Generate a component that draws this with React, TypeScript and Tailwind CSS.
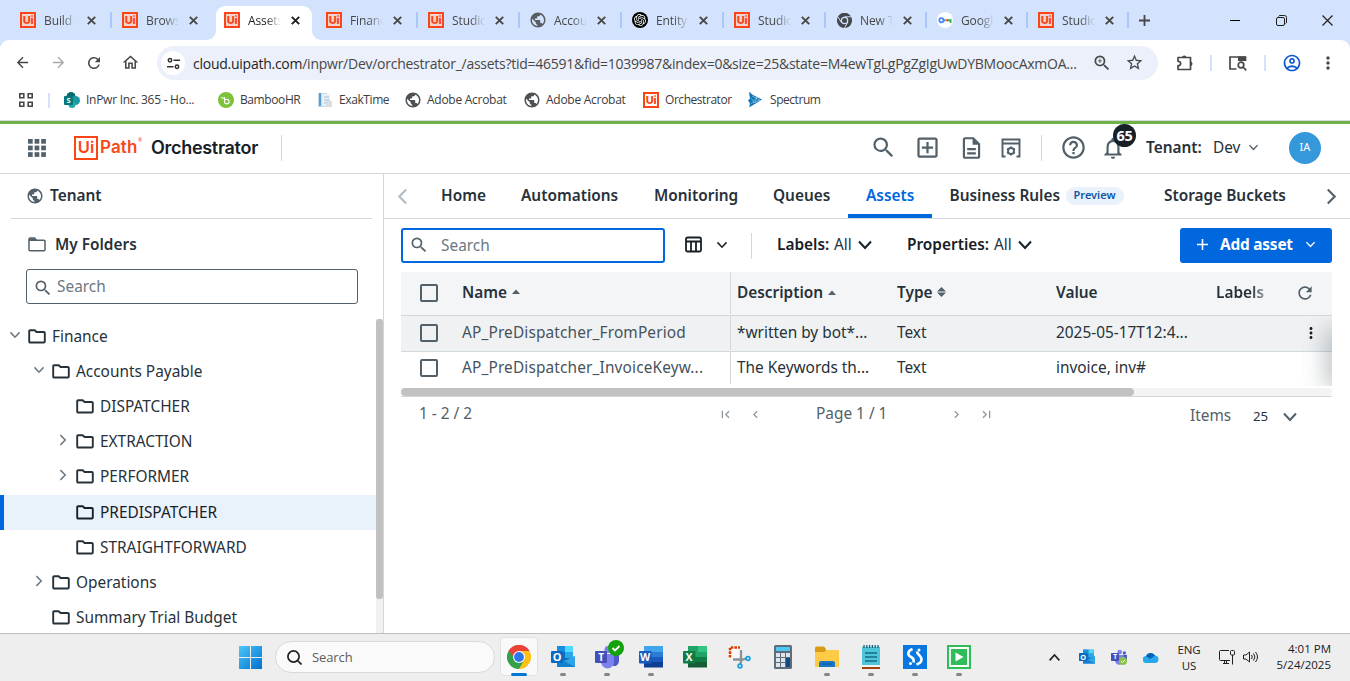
import React from "react";
import {
  MdPublic, MdSearch, MdOutlineAddBox, MdOutlineDescription, MdHelpOutline, MdNotificationsNone,
  MdRefresh, MdMoreVert, MdAdd, MdArrowBack, MdArrowForward, MdOutlineHome,
  MdZoomIn, MdStarBorder, MdOutlineAccountCircle, MdFirstPage, MdLastPage,
  MdChevronLeft, MdChevronRight,
} from "react-icons/md";
import { SiOpenai } from "react-icons/si";

const CHROME = "font-['Open_Sans','Noto_Sans',sans-serif]";

function Chevron({ dir = "down", className = "" }: { dir?: "down" | "up" | "left" | "right"; className?: string }) {
  const d = { down: "M2 4.5 8 11l6-6.5", up: "M2 11.5 8 5l6 6.5", left: "M11.5 1.5 5 8l6.5 6.5", right: "M4.5 1.5 11 8l-6.5 6.5" }[dir];
  return (
    <svg viewBox="0 0 16 16" fill="none" stroke="currentColor" strokeWidth="2" className={"shrink-0 " + className}>
      <path d={d} />
    </svg>
  );
}

function UiIcon({ light = false }: { light?: boolean }) {
  return (
    <span className={"flex h-4 w-4 shrink-0 items-center justify-center border-2 border-[#fa4616] font-['Inter',sans-serif] text-[11px] leading-none font-extrabold tracking-[-0.3px] text-[#fa4616] " + (light ? "bg-white" : "bg-[#f5d3d0]")}>
      Ui
    </span>
  );
}

function ChromeLogo({ size, mono = false }: { size: number; mono?: boolean }) {
  return (
    <svg width={size} height={size} viewBox="0 0 24 24">
      <path d="M12 12 1.6 6A12 12 0 0 1 22.4 6Z" fill={mono ? "#45494d" : "#ea4335"} />
      <path d="M12 12V6h10.4A12 12 0 0 1 12 24Z" fill={mono ? "#45494d" : "#fbc116"} />
      <path d="m12 12 5.2 3L12 24A12 12 0 0 1 1.6 6Z" fill={mono ? "#45494d" : "#34a04c"} />
      <path d="M1.6 6 6.8 15 12 12V6Z" fill={mono ? "#45494d" : "#34a04c"} />
      <path d="M1.6 6 7 12 12 6h10.4A12 12 0 0 0 1.6 6Z" fill={mono ? "#45494d" : "#ea4335"} />
      {mono && <path d="M12 6h10.4M6.8 15 1.6 6M17.2 15 12 24" stroke="#d3e3fd" strokeWidth="1.5" />}
      <circle cx="12" cy="12" r="6" fill={mono ? "#d3e3fd" : "#fff"} />
      <circle cx="12" cy="12" r={mono ? 4 : 4.9} fill={mono ? "#45494d" : "#2e74ea"} />
    </svg>
  );
}

function KeyIcon() {
  return (
    <svg width="16" height="16" viewBox="0 0 16 16">
      <circle cx="8" cy="8" r="8" fill="#fff" />
      <circle cx="4.400" cy="8.300" r="2.100" fill="none" stroke="#4285f4" strokeWidth="1.700" />
      <path d="M6.500 7.300H9v2H6.500z" fill="#4285f4" />
      <path d="M8 7.300h2v2H8z" fill="#fbbc04" />
      <path d="M10 7.300h4.500V11h-1.800V9.300H10z" fill="#34a853" />
      <path d="M9.300 7.300h1.400v2H9.300z" fill="#ea4335" />
    </svg>
  );
}

type Fav = "ui" | "globe" | "openai" | "chrome" | "key";
const tabs: { t: string; f: Fav; active?: boolean; sep: boolean; narrow?: boolean }[] = [
  { t: "Build - Studio", f: "ui", sep: true },
  { t: "Browse", f: "ui", sep: false },
  { t: "Assets", f: "ui", active: true, sep: false },
  { t: "Finance", f: "ui", sep: true },
  { t: "Studio", f: "ui", sep: true },
  { t: "Account", f: "globe", sep: true },
  { t: "Entity", f: "openai", sep: true },
  { t: "Studio", f: "ui", sep: true },
  { t: "New Tab", f: "chrome", sep: true, narrow: true },
  { t: "Google", f: "key", sep: true, narrow: true },
  { t: "Studio", f: "ui", sep: true, narrow: true },
];

function Favicon({ f }: { f: Fav }) {
  if (f === "ui") return <UiIcon />;
  if (f === "globe") return <MdPublic className="h-[18px] w-[18px] shrink-0 text-[#5a5e62]" />;
  if (f === "openai") return <span className="flex h-4 w-4 items-center justify-center rounded-full bg-black"><SiOpenai className="h-3 w-3 text-white" /></span>;
  if (f === "chrome") return <ChromeLogo size={15} mono />;
  return <KeyIcon />;
}

function TabStrip() {
  return (
    <div className={"flex h-10 items-stretch bg-[#d3e3fd] pl-[10px] " + CHROME}>
      {tabs.map((tab, i) => (
        <div key={i} className={"relative flex shrink-0 items-center pl-[10px] " + (tab.narrow ? "w-[101px]" : "w-[102px]")}>
          {tab.active && (
            <svg className="absolute top-[6px] -left-[8px]" width="118" height="34" viewBox="0 0 118 34">
              <path d="M0 34c6 0 10-4 10-10V10C10 4 14 0 20 0h76c6 0 10 4 10 10v14c0 6 4 10 10 10Z" fill="#fff" />
            </svg>
          )}
          <span className="relative flex h-4 w-4 items-center justify-center"><Favicon f={tab.f} /></span>
          <span className={"relative mt-px ml-2 w-[33px] overflow-hidden text-[12px] tracking-[-0.1px] whitespace-nowrap [mask-image:linear-gradient(to_right,black_55%,transparent_100%)] " + (tab.active ? "text-[#1f1f1f]" : "text-[#474747]")}>{tab.t}</span>
          <svg className={"relative ml-[10px] h-[9px] w-[9px] " + (tab.active ? "text-[#1f1f1f]" : "text-[#474747]")} viewBox="0 0 9 9" stroke="currentColor" strokeWidth="1.900"><path d="m.8.8 7.400 7.400m0-7.400L.8 8.200" /></svg>
          {tab.sep && <span className="ml-auto h-4 w-[2px] bg-[#a8c7fa]" />}
        </div>
      ))}
      <div className="flex flex-1 items-center text-[#1f1f1f]">
        <svg className="ml-[10px] h-[11px] w-[11px] text-[#474747]" viewBox="0 0 11 11" stroke="currentColor" strokeWidth="1.800"><path d="M0 5.500h11M5.500 0v11" /></svg>
        <span className="ml-[80px] h-px w-[10px] bg-black" />
        <svg className="ml-[36px] h-[11px] w-[11px]" viewBox="0 0 11 11" fill="none" stroke="currentColor"><rect x=".5" y="2.500" width="8" height="8" rx="1.500" /><path d="M2.500 1.500c.3-.7.8-1 1.500-1H8.500a2 2 0 0 1 2 2V7c0 .7-.4 1.300-1 1.500" /></svg>
        <svg className="ml-[35px] h-[11px] w-[11px]" viewBox="0 0 11 11" stroke="currentColor" strokeWidth="1.200"><path d="m.5.5 10 10m0-10-10 10" /></svg>
      </div>
    </div>
  );
}

function AddressRow() {
  return (
    <div className={"flex h-[45px] items-center text-[#474747] " + CHROME}>
      <div className="flex w-11 justify-center"><MdArrowBack className="h-[17px] w-[17px]" /></div>
      <div className="flex w-7 justify-center"><MdArrowForward className="h-[17px] w-[17px] text-[#a9a9a9]" /></div>
      <div className="flex w-11 justify-center"><MdRefresh className="h-[18px] w-[18px]" /></div>
      <div className="flex w-7 justify-center"><MdOutlineHome className="h-[19px] w-[19px]" /></div>
      <div className="mt-px ml-[13px] flex h-[34px] w-[1001px] items-center rounded-full bg-[#ebf0fa] pl-[4px]">
        <span className="flex h-6 w-6 items-center justify-center rounded-full bg-white">
          <svg className="h-[13px] w-[13px]" viewBox="0 0 13 13" fill="none" stroke="#303030" strokeWidth="1.500"><circle cx="3" cy="3.300" r="1.700" /><path d="M6.500 3.300H13M0 9.700h6.500" /><circle cx="10" cy="9.700" r="1.700" /></svg>
        </span>
        <span className="ml-[8px] w-[897px] text-[14px] tracking-[-0.255px] whitespace-nowrap text-[#474747]">
          <span className="text-[#1f1f1f]">cloud.uipath.com</span>/inpwr/Dev/orchestrator_/assets?tid=46591&amp;fid=1039987&amp;index=0&amp;size=25&amp;state=M4ewTgLgPgZgIgUwDYBMoocAxmOA...
        </span>
        <MdZoomIn className="mb-px ml-[2px] h-[20px] w-[20px] shrink-0" />
        <MdStarBorder className="mb-px ml-[13px] h-[19px] w-[19px] shrink-0" />
      </div>
      <svg className="ml-[18px] h-[18px] w-[18px]" viewBox="0 0 18 18" fill="none" stroke="currentColor" strokeWidth="1.700"><path d="M2 3.500h12.500v12H2v-3.800c3.500.2 3.500-4.600 0-4.400Z" strokeLinejoin="round" /><path d="M6.500 3a2 2 0 0 1 3.500 0Zm8.500 5a2 2 0 0 1 0 3.500Z" fill="currentColor" strokeWidth="1" /></svg>
      <span className="ml-[16px] h-4 w-[2px] bg-[#d3e3fd]" />
      <svg className="ml-[17px] h-4 w-[18px]" viewBox="0 0 18 16" fill="none" stroke="currentColor" strokeWidth="1.700"><path d="M7.500 14H1V2h15.500v4" /><path d="M9 1.500h8V6H9z" fill="currentColor" stroke="none" /><circle cx="12" cy="10" r="2.800" /><path d="m14 12 3.300 3.300" /></svg>
      <span className="ml-[17px] h-4 w-[2px] bg-[#d3e3fd]" />
      <MdOutlineAccountCircle className="ml-[16px] h-[20px] w-[20px] text-[#0b57d0]" />
      <MdMoreVert className="ml-[16px] h-5 w-5" />
    </div>
  );
}

function Bookmarks() {
  return (
    <div className={"flex h-[30px] items-center text-[12px] tracking-[-0.27px] whitespace-nowrap text-[#3c3c3c] " + CHROME}>
      <svg className="ml-[19px] h-[14px] w-[14px]" viewBox="0 0 14 14" fill="none" stroke="#474747" strokeWidth="1.600"><path d="M.8.8h4v4h-4zM9.200.8h4v4h-4zM.8 9.200h4v4h-4zM9.200 9.200h4v4h-4z" /></svg>
      <span className="ml-[15px] h-[15px] w-[2px] bg-[#d3e3fd]" />
      <span className="ml-[14px] flex w-[154px] items-center">
        <svg className="mr-[6px] h-4 w-4" viewBox="0 0 16 16"><circle cx="7" cy="4.500" r="4.500" fill="#036c70" /><circle cx="11.500" cy="8.500" r="4.500" fill="#1a9ba1" /><circle cx="8" cy="12.500" r="3.500" fill="#27a5ae" /><rect y="4" width="9" height="9" rx="1" fill="#03787c" /><text x="4.500" y="11.300" textAnchor="middle" fontSize="7.500" fontWeight="700" fill="#fff" fontFamily="Open Sans">S</text></svg>
        <span>InPwr Inc. 365 - Ho...</span>
      </span>
      <span className="flex w-[99px] items-center">
        <svg className="mr-[6px] h-4 w-4" viewBox="0 0 16 16"><circle cx="8" cy="8" r="8" fill="#7ec23c" /><path d="M3 5.500 6.500 6.500M6.500 5v4.500a2.300 2.300 0 1 0 2.300-2.300c-1 0-2 .7-2.300 1.600" fill="none" stroke="#fff" strokeWidth="1.100" /></svg>
        <span className="tracking-[-0.4px]">BambooHR</span>
      </span>
      <span className="flex w-[88px] items-center">
        <svg className="mr-[6px] h-4 w-4" viewBox="0 0 16 16"><path d="M1 1h9v14H1z" fill="#c5dcee" /><path d="M2 1h2v13H2z" fill="#5a9bd5" /><path d="M5 2h8v12H5z" fill="#eaf2f8" /><path d="M7 5h5M7 8h6M7 11h6" stroke="#a9c0d2" /><path d="M9 9h6v6H9z" fill="#d9dee3" /></svg>
        <span className="tracking-[-0.4px]">ExakTime</span>
      </span>
      <span className="flex w-[119px] items-center"><MdPublic className="mr-[5px] -ml-px h-[18px] w-[18px] text-[#4d5054]" />Adobe Acrobat</span>
      <span className="flex w-[119px] items-center"><MdPublic className="mr-[5px] -ml-px h-[18px] w-[18px] text-[#4d5054]" />Adobe Acrobat</span>
      <span className="flex w-[105px] items-center"><span className="mr-[6px]"><UiIcon light /></span><span className="tracking-[-0.45px]">Orchestrator</span></span>
      <span className="flex items-center">
        <svg className="mr-[7px] h-4 w-[15px]" viewBox="0 0 15 16"><path d="M1 0c2 1 3 2.500 4 3l9 4.500-8 5-5 3c2-4 0-6-1-7l2-2Z" fill="#1374b4" /><path d="m3 6 4 5 2-6-6 7m1-8 8 4-7 3" stroke="#8fc7e8" fill="none" strokeWidth=".7" /></svg>
        <span className="tracking-[-0.45px]">Spectrum</span>
      </span>
    </div>
  );
}

function AppHeader() {
  return (
    <header className="flex h-[50px] shrink-0 items-center border-b border-[#cfd8dd] bg-white pb-[2px] text-[#526069]">
      <svg className="ml-7 h-[18px] w-[18px] shrink-0" viewBox="0 0 18 18" fill="currentColor">
        {[0, 6.6, 13.2].map((y) => [0, 6.6, 13.2].map((x) => <rect key={x + "-" + y} x={x} y={y} width="4.700" height="4.700" />))}
      </svg>
      <span className="ml-7 flex h-6 w-6 shrink-0 items-center justify-center border-2 border-[#fa4616] font-['Inter',sans-serif] text-[16.5px] leading-none font-semibold text-[#fa4616]">Ui</span>
      <span className="ml-[2px] w-[39px] shrink-0 font-['Inter',sans-serif] text-[17px] font-semibold tracking-[0.1px] text-[#fa4616]">Path</span>
      <span className="mb-[14px] -ml-[1px] w-[3px] text-[5px] text-[#fa4616]">®</span>
      <span className="ml-[10px] w-[130px] shrink-0 font-['Inter',sans-serif] text-[18px] font-semibold tracking-[-0.3px] text-[#182027]">Orchestrator</span>
      <span className="h-[26px] w-px bg-[#cfd8dd]" />
      <div className="ml-auto flex h-full w-[489px] shrink-0 items-center">
        <div className="flex w-11 justify-center"><MdSearch className="h-[27px] w-[27px]" /></div>
        <div className="flex w-11 justify-center"><MdOutlineAddBox className="h-[27px] w-[27px]" /></div>
        <div className="flex w-11 justify-center"><MdOutlineDescription className="h-[26px] w-[27px]" /></div>
        <div className="flex w-9 justify-center">
          <svg className="h-5 w-5" viewBox="0 0 20 20" fill="none" stroke="currentColor" strokeWidth="1.900"><path d="M4.500 18.500H1.500V1.500h17v17h-3M1 5.500h18" /><circle cx="10" cy="13" r="3" /><path d="M10 8.500v1.600m0 5.800v1.600M6.100 10.800l1.400.8m5 2.900 1.400.8m0-4.500-1.400.8m-5 2.900-1.400.8" /></svg>
        </div>
        <span className="ml-[12px] h-[26px] w-px bg-[#cfd8dd]" />
        <div className="ml-[9px] flex w-11 justify-center"><MdHelpOutline className="h-[27px] w-[27px]" /></div>
        <div className="relative flex w-9 justify-center">
          <MdNotificationsNone className="-ml-px h-[26px] w-[26px]" />
          <span className="absolute -top-[11px] left-[18px] flex h-[23px] w-[23px] items-center justify-center rounded-full bg-[#182027] text-[14.5px] leading-none font-bold tracking-[-0.3px] text-white">65</span>
        </div>
        <span className="ml-[15px] w-[67px] text-[15.4px] font-semibold text-[#273139]">Tenant:</span>
        <span className="w-[35px] text-[15.4px] text-[#273139]">Dev</span>
        <Chevron className="h-[11px] w-[11px]" />
        <span className="ml-[30px] flex h-[32px] w-[32px] items-center justify-center rounded-full bg-[#3498db] text-[11px] text-white">IA</span>
      </div>
    </header>
  );
}

function FolderIcon({ className = "" }: { className?: string }) {
  return (
    <svg className={"h-[15px] w-[18px] shrink-0 " + className} viewBox="0 0 18 15" fill="none" stroke="currentColor" strokeWidth="1.900" strokeLinejoin="round">
      <path d="M1.200 2.200q0-1 1-1H6.700L8.600 3h7.200q1 0 1 1v8.500q0 1-1 1H2.200q-1 0-1-1Z" />
    </svg>
  );
}

const tree: { t: string; pad: string; chev?: "down" | "right"; sel?: boolean }[] = [
  { t: "Finance", pad: "h-[35px] pl-2", chev: "down" },
  { t: "Accounts Payable", pad: "h-[35px] pl-8", chev: "down" },
  { t: "DISPATCHER", pad: "h-[35px] pl-14" },
  { t: "EXTRACTION", pad: "h-[35px] pl-14", chev: "right" },
  { t: "PERFORMER", pad: "mb-px h-[35px] pl-14", chev: "right" },
  { t: "PREDISPATCHER", pad: "h-[35px] pl-[52px]", sel: true },
  { t: "STRAIGHTFORWARD", pad: "h-[35px] pl-14" },
  { t: "Operations", pad: "h-[35px] pl-8", chev: "right" },
  { t: "Summary Trial Budget", pad: "h-[35px] pl-8" },
];

function Sidebar() {
  return (
    <aside className="flex w-[384px] shrink-0 flex-col border-r border-[#cfd8dd] text-[15.4px] text-[#273139]">
      <div className="mr-[11px] ml-[11px] flex h-[45px] items-center border-b border-[#cfd8dd] pl-[15px] font-semibold">
        <MdPublic className="h-[18px] w-[18px] text-[#526069]" />
        <span className="ml-[6px]">Tenant</span>
      </div>
      <div className="mt-[8px] flex h-[35px] items-center pl-[28px] font-semibold">
        <svg className="h-[15px] w-[18px] shrink-0 text-[#526069]" viewBox="0 0 18 15" fill="none" stroke="currentColor" strokeWidth="1.500"><path d="M1 2.200Q1 1 2.200 1H6.500l2 2.200H16q1 0 1 1v8.600q0 1-1 1H2q-1 0-1-1Z" /><path d="M1 1.500h6.500L9 4H1Z" fill="currentColor" stroke="none" /></svg>
        <span className="ml-[9px]">My Folders</span>
      </div>
      <div className="mt-[7px] ml-[26px] flex h-[35px] w-[332px] items-center rounded-[3px] border border-[#526069] pl-[6px] text-[#6b7882]">
        <MdSearch className="mt-[3px] h-5 w-5 text-[#526069]" />
        <span className="ml-[4px]">Search</span>
      </div>
      <div className="mt-[15px] flex min-h-0 flex-1">
        <div className="w-[376px] overflow-hidden">
          {tree.map((n) => (
            <div key={n.t} className={"flex items-center " + n.pad + (n.sel ? " border-l-4 border-[#0067df] bg-[#e9f1fa] text-[#182027]" : "")}>
              <span className="flex w-5 pl-[1px]">{n.chev && <Chevron dir={n.chev} className="-mt-[3px] h-3 w-3 text-[#6b7882]" />}</span>
              <FolderIcon />
              <span className="ml-[6px]">{n.t}</span>
            </div>
          ))}
        </div>
        <div className="w-[7px] bg-[#f1f1f1]"><div className="h-[280px] rounded-[3px] bg-[#c1c1c1]" /></div>
      </div>
    </aside>
  );
}

function NavTabs() {
  const tab = "flex h-full shrink-0 items-center justify-start whitespace-nowrap ";
  return (
    <nav className="flex h-[45px] items-center border-b border-[#cfd8dd] text-[15.4px] font-semibold text-[#273139]">
      <div className="flex w-[57px] pl-[10px]"><Chevron dir="left" className="h-[17px] w-[17px] text-[#b4bcc2]" /></div>
      <span className={tab + "w-[80px]"}>Home</span>
      <span className={tab + "w-[133px]"}>Automations</span>
      <span className={tab + "w-[119px]"}>Monitoring</span>
      <span className={tab + "w-[75px]"}>Queues</span>
      <span className={tab + "h-[44px] w-[84px] border-b-4 border-[#0067df] pt-[4px] pl-[18px] text-[#0067df]"}>Assets</span>
      <span className={tab + "w-[232px] pl-[17.5px]"}>
        Business Rules
        <span className="ml-[5.5px] flex h-[18px] w-[58px] items-center justify-center rounded-full bg-[#e9f1fa] pb-px text-[11px] text-[#1057a8]">Preview</span>
      </span>
      <span className={tab + "w-[159px]"}>Storage Buckets</span>
      <Chevron dir="right" className="h-[17px] w-[17px] text-[#526069]" />
    </nav>
  );
}

function Toolbar() {
  return (
    <div className="mt-[9px] flex h-[35px] items-center pl-[17px] text-[15.4px] text-[#182027]">
      <div className="flex h-[35px] w-[264px] items-center rounded-[3px] border-2 border-[#0067df] pl-[6px] text-[#6b7882]">
        <MdSearch className="mb-px h-5 w-5 text-[#526069]" />
        <span className="ml-[12px]">Search</span>
      </div>
      <svg className="mb-[2px] ml-5 h-[17px] w-[17px]" viewBox="0 0 17 17" fill="none" stroke="currentColor" strokeWidth="1.800"><rect x="1" y="1.500" width="15" height="14" rx="1.500" /><path d="M1 5.500h15M6 5.500v10M11 5.500v10" /></svg>
      <Chevron className="mb-[2px] ml-[14px] h-3 w-3" />
      <span className="ml-[23px] h-[26px] w-px bg-[#cfd8dd]" />
      <span className="mb-[2px] ml-[25px] w-[57px] font-semibold">Labels:</span>
      <span className="mb-[2px] w-[23px] text-[#273139]">All</span>
      <Chevron className="mb-px h-4 w-4" />
      <span className="mb-[2px] ml-[34px] w-[87px] font-semibold">Properties:</span>
      <span className="mb-[2px] w-[23px] text-[#273139]">All</span>
      <Chevron className="mb-px h-4 w-4" />
      <button className="mr-[18px] ml-auto flex h-[35px] w-[152px] items-center rounded-[3px] bg-[#0067df] pb-[2px] pl-[13px] font-bold text-white">
        <MdAdd className="h-[19px] w-[19px]" />
        <span className="ml-[8px] w-[85px] text-left tracking-[-0.2px] whitespace-nowrap">Add asset</span>
        <Chevron className="h-[11px] w-[11px]" />
      </button>
    </div>
  );
}

const Check = () => <span className="h-[18px] w-[18px] rounded-[2px] border-2 border-[#526069]" />;

function Cells({ name, desc, type, value, header }: { name: React.ReactNode; desc: React.ReactNode; type: React.ReactNode; value: string; header?: boolean }) {
  return (
    <>
      <span className="flex w-[61px] items-center pl-[19px]"><Check /></span>
      <span className={"flex w-[268px] items-center " + (header ? "mb-px" : "mb-px tracking-[0.15px] text-[#47535c]")}>{name}</span>
      <span className="flex w-[167px] items-center self-stretch border-l border-[#cfd8dd] pb-px pl-[6px]">{desc}</span>
      <span className="mb-px flex w-[159px] items-center">{type}</span>
      <span className="mb-px w-[160px]">{value}</span>
    </>
  );
}

const Up = () => <svg className="mb-px ml-[5px] h-[5px] w-[8px]" viewBox="0 0 8 5" fill="#526069"><path d="m0 5 4-4.500L8 5Z" /></svg>;

function AssetsTable() {
  return (
    <div className="mt-[9px] mr-[18px] ml-[17px] text-[15.4px] text-[#273139]">
      <div className="relative">
        <div className="flex h-[44px] items-center border-b border-[#cfd8dd] bg-[#f4f5f7] pb-px font-semibold">
          <Cells header name={<>Name<Up /></>} desc={<>Description<Up /></>} type={<>Type<svg className="ml-[4px] h-[10px] w-[9px]" viewBox="0 0 8 9" fill="#526069"><path d="m0 4 4-4 4 4ZM0 5h8L4 9Z" /></svg></>} value="Value" />
          <span className="mb-px w-[50px] [mask-image:linear-gradient(to_right,black_70%,#0006_100%)]">Labels</span>
          <MdRefresh className="ml-[29px] h-5 w-5 text-[#526069]" />
        </div>
        <div className="flex h-[36px] items-center border-b border-[#cfd8dd] bg-[#eff1f3] pb-px">
          <Cells name="AP_PreDispatcher_FromPeriod" desc="*written by bot*..." type="Text" value="2025-05-17T12:4..." />
          <MdMoreVert className="ml-[86px] h-[18px] w-[18px] text-[#182027]" />
        </div>
        <div className="flex h-[33px] items-center pb-px">
          <Cells name="AP_PreDispatcher_InvoiceKeyw..." desc="The Keywords th..." type="Text" value="invoice, inv#" />
        </div>
        <div className="absolute top-[44px] right-0 h-[70px] w-[30px] overflow-hidden"><div className="absolute top-[20px] left-[30px] h-[46px] w-5 shadow-[0_0_22px_7px_rgba(82,96,105,0.35)]" /></div>
      </div>
      <div className="mt-[3px] h-2 rounded-full bg-[#f3f3f3]"><div className="h-2 w-[733px] rounded-full bg-[#c1c1c1]" /></div>
      <div className="flex h-[36px] items-center border-t border-[#cfd8dd] text-[#526069]">
        <span className="mb-px w-[317px] pl-[18px] whitespace-nowrap">1 - 2 / 2</span>
        <MdFirstPage className="h-[15px] w-[15px] text-[#8d969d]" />
        <MdChevronLeft className="ml-[15px] h-[15px] w-[15px] text-[#8d969d]" />
        <span className="mb-px ml-[53px] w-[133px]">Page 1 / 1</span>
        <MdChevronRight className="h-[15px] w-[15px] text-[#8d969d]" />
        <MdLastPage className="ml-[15px] h-[15px] w-[15px] text-[#8d969d]" />
        <span className="mt-[3px] ml-[196px] w-[63px]">Items</span>
        <span className="mt-[5px] w-[29px] text-[13.200px] text-[#273139]">25</span>
        <Chevron className="mt-[5px] h-4 w-4" />
      </div>
    </div>
  );
}

function Letter({ c, s }: { c: string; s: number }) {
  return <text x="6.100" y={12 + s * 0.36} textAnchor="middle" fontSize={s} fontWeight="700" fill="#fff" fontFamily="Open Sans">{c}</text>;
}

function Outlook({ className = "h-6 w-6" }: { className?: string }) {
  return (
    <svg className={className} viewBox="0 0 24 24">
      <path d="M6 1h16v19H6z" fill="#0f6cbd" /><path d="M14 1h8v6h-8z" fill="#50d9ff" /><path d="M6 1h8v6H6z" fill="#1490df" /><path d="M14 7h8v6h-8z" fill="#28a8ea" />
      <path d="M6 11l9 5 9-5v11H6z" fill="#1480d0" /><path d="M24 11v11L13 16Z" fill="#32a4e4" />
      <rect y="6" width="12" height="12" rx="1" fill="#0a6ac0" /><Letter c="O" s={11} />
    </svg>
  );
}

function Teams({ className = "h-6 w-6" }: { className?: string }) {
  return (
    <svg className={className} viewBox="0 0 24 24">
      <circle cx="13" cy="4.500" r="3.500" fill="#7b83eb" /><circle cx="20" cy="6" r="2.500" fill="#5059c9" />
      <path d="M15 9h9v7a5 5 0 0 1-6 5Z" fill="#5059c9" /><path d="M6 9h13v8a6.500 6.500 0 0 1-13 0Z" fill="#7b83eb" />
      <rect y="6" width="12" height="12" rx="1" fill="#464eb8" /><Letter c="T" s={10} />
    </svg>
  );
}

function Office({ letter, c }: { letter: string; c: string[] }) {
  return (
    <svg className="h-6 w-6" viewBox="0 0 24 24">
      <path d="M5 1h19v6H5z" fill={c[0]} /><path d="M5 7h19v5H5z" fill={c[1]} /><path d="M5 12h19v5H5z" fill={c[2]} /><path d="M5 17h19v5.500H5z" fill={c[3]} />
      {letter === "X" && <path d="M5 1h10v11H5z" fill="#21a366" />}
      <rect y="6" width="12.500" height="12.500" rx="1" fill={c[4]} /><Letter c={letter} s={10.5} />
    </svg>
  );
}

const apps: { icon: React.ReactNode; run?: boolean; active?: boolean }[] = [
  { icon: <ChromeLogo size={24} />, active: true },
  { icon: <Outlook />, run: true },
  {
    icon: (
      <span className="relative"><Teams />
        <svg className="absolute -top-[5px] left-[13px] h-4 w-4" viewBox="0 0 16 16"><circle cx="8" cy="8" r="8" fill="#13a10e" /><path d="m4.500 8 2.500 2.500L11.500 6" fill="none" stroke="#fff" strokeWidth="1.800" /></svg>
      </span>
    ), run: true,
  },
  { icon: <Office letter="W" c={["#41a5ee", "#2b7cd3", "#185abd", "#103f91", "#185abd"]} />, run: true },
  { icon: <Office letter="X" c={["#33c481", "#21a366", "#107c41", "#185c37", "#107c41"]} /> },
  {
    icon: (
      <svg className="h-6 w-6" viewBox="0 0 24 24"><path d="M1 1h13v13H1z" fill="#f8f8f8" /><path d="M3 12.500V2.500h10" fill="none" stroke="#d83b01" strokeWidth="2.600" strokeDasharray="2.600 1" /><path d="M14 5v12l-1 2M6 14.500h10l3-1" fill="none" stroke="#8a9299" strokeWidth="2.300" /><circle cx="13" cy="21" r="1.900" fill="none" stroke="#1a9fe0" strokeWidth="1.800" /><circle cx="21" cy="13.500" r="1.900" fill="none" stroke="#1a9fe0" strokeWidth="1.800" /></svg>
    ),
  },
  {
    icon: (
      <svg className="h-6 w-[18px]" viewBox="0 0 18 24"><rect width="18" height="24" rx="1.500" fill="#5f6d7a" /><path d="M2 2h14v4H2z" fill="#4cc8f5" />
        {[8, 13, 18].map((y) => [2, 7, 12].map((x) => <rect key={x + "-" + y} x={x} y={y} width="4" height="4" fill="#dfe5ea" />))}
        <path d="M12 13h4v9h-4z" fill="#0f4a82" />
      </svg>
    ),
  },
  { icon: <svg className="h-[22px] w-6" viewBox="0 0 24 22"><path d="M0 2q0-1.500 1.500-1.500H9L11 3v3H0Z" fill="#d99a16" /><path d="M0 6h9l3-2h11q1 0 1 1v16H0Z" fill="#ffca45" /><path d="M4 21v-4q0-2 2-2h12q2 0 2 2v4Z" fill="#1b75c4" /><path d="M7 18h10" stroke="#0d599e" /></svg>, run: true },
  { icon: <svg className="h-6 w-[18px]" viewBox="0 0 18 24"><path d="M0 2h18v19H0z" fill="#4fc5dc" /><path d="M2 0v3m2.800-3v3m2.800-3v3m2.800-3v3m2.800-3v3M16 0v3" stroke="#155e75" strokeWidth="1.300" /><path d="M3 8h12M3 12h12M3 16h12" stroke="#146b86" strokeWidth="1.500" /><path d="M0 20h18v2H0z" fill="#f3f3f3" /><path d="M0 22h18v2H0z" fill="#a3440c" /></svg>, run: true },
  { icon: <svg className="h-6 w-6" viewBox="0 0 24 24"><path d="M0 0h24v24H0z" fill="#0878e0" /><path d="M9.500 4C4.500 6 4 10 8 12c3 1.500 3 3.500 2.500 5.500M14 6.500c0 3 4.500 4 4.500 8 0 2.500-2 4-5 5" fill="none" stroke="#fff" strokeWidth="2.600" /><circle cx="16" cy="5" r="1.500" fill="#fff" /><circle cx="7.500" cy="18.500" r="1.500" fill="#fff" /></svg>, run: true },
  { icon: <svg className="h-6 w-6" viewBox="0 0 24 24"><path d="M0 0h24v24H0z" fill="#2ebd59" /><path d="M3 3h18v18H3z" fill="none" stroke="#fff" strokeWidth="1.800" /><path d="m8.500 7.500 8 4.500-8 4.500Z" fill="#fff" /></svg>, run: true },
];

function Taskbar() {
  return (
    <footer className={"flex h-[48px] shrink-0 items-center border-t border-[#bdbdbd] bg-[#eeeeee] pb-px text-[#202020] " + CHROME}>
      <svg className="ml-[239px] h-[23px] w-[23px]" viewBox="0 0 23 23">
        <defs><linearGradient id="win" x1="0" y1="0" x2="1" y2="1"><stop offset="0" stopColor="#4cc8f8" /><stop offset="1" stopColor="#0070d0" /></linearGradient></defs>
        <path d="M0 0h11v11H0zM12 0h11v11H12zM0 12h11v11H0zM12 12h11v11H12z" fill="url(#win)" />
      </svg>
      <div className="ml-[13px] flex h-8 w-[220px] items-center rounded-full border border-[#d9d9d9] bg-[#fafafa] pl-[11px]">
        <svg className="h-[15px] w-[15px]" viewBox="0 0 15 15" fill="none" stroke="#202020" strokeWidth="1.700"><circle cx="6.500" cy="6.500" r="5.600" /><path d="m10.500 10.500 4 4" /></svg>
        <span className="mt-px ml-[10px] text-[13px] tracking-[-0.1px] text-[#5d5d5d]">Search</span>
      </div>
      <div className="ml-[2px] flex h-full">
        {apps.map((a, i) => (
          <div key={i} className="relative flex h-full w-11 items-center justify-center">
            {a.active && <span className="absolute top-[3px] left-[3px] h-[39px] w-[38px] rounded-[4px] border border-[#e2e2e2] bg-[#f9f9f9]" />}
            <span className="relative flex">{a.icon}</span>
            {a.active && <span className="absolute bottom-[4px] left-[14px] h-[3px] w-4 rounded-full bg-[#0078d4]" />}
            {a.run && <span className="absolute bottom-[4px] left-[19px] h-[3px] w-[6px] rounded-full bg-[#868686]" />}
          </div>
        ))}
      </div>
      <Chevron dir="up" className="ml-[67px] h-[13px] w-[13px]" />
      <Outlook className="ml-[18px] h-4 w-4" />
      <span className="relative ml-4 flex"><Teams className="h-4 w-4" /><svg className="absolute top-[8px] left-[8px] h-2 w-2" viewBox="0 0 8 8"><circle cx="4" cy="4" r="4" fill="#8bc34a" /><path d="m2 4 1.500 1.500L6 3" fill="none" stroke="#fff" /></svg></span>
      <svg className="ml-[16px] h-[11px] w-4" viewBox="0 0 16 11"><path d="M3.500 11A3.500 3.500 0 0 1 3 4 5 5 0 0 1 12 3.500 3.800 3.800 0 0 1 12.500 11Z" fill="#28a8ea" /><path d="M3 4a5 5 0 0 1 9-.5L7 7Z" fill="#0364b8" /></svg>
      <span className="mt-px ml-[14px] w-[32px] text-center text-[11.500px] leading-4 tracking-[-0.1px]">ENG<br />US</span>
      <svg className="ml-[14px] h-4 w-4" viewBox="0 0 16 16" fill="none" stroke="#202020"><path d="M10 1.500H1.500q-1 0-1 1v8q0 1 1 1H11m-7 3h6m-4.500-3v3m2-3v3" /><rect x="11.500" y="1.500" width="4" height="4.500" rx="1" /><path d="M13.500 6v9.500" /></svg>
      <svg className="ml-[8px] h-[14px] w-4" viewBox="0 0 16 14" fill="none" stroke="#202020"><path d="M.5 5h2.500L6.500 2v10L3 9H.5ZM8.500 5q1.500 2 0 4M10.500 3.500q2.800 3.500 0 7M12.500 2q4 5 0 10" /></svg>
      <span className="mr-[19px] mb-px ml-auto text-right text-[11.500px] leading-4 whitespace-nowrap">4:01 PM<br />5/24/2025</span>
    </footer>
  );
}

export default function App() {
  return (
    <div className="flex h-[681px] w-[1350px] flex-col overflow-hidden bg-white font-['Noto_Sans',sans-serif]">
      <TabStrip />
      <div className="h-[81px] bg-[#d3e3fd]">
        <div className="h-full rounded-t-[9px] border-b border-[#dadada] bg-white">
          <AddressRow />
          <Bookmarks />
        </div>
      </div>
      <div className="h-[3px] shrink-0 bg-[#6cb44a]" />
      <AppHeader />
      <div className="flex min-h-0 flex-1">
        <Sidebar />
        <main className="min-w-0 flex-1">
          <NavTabs />
          <Toolbar />
          <AssetsTable />
        </main>
      </div>
      <Taskbar />
    </div>
  );
}
